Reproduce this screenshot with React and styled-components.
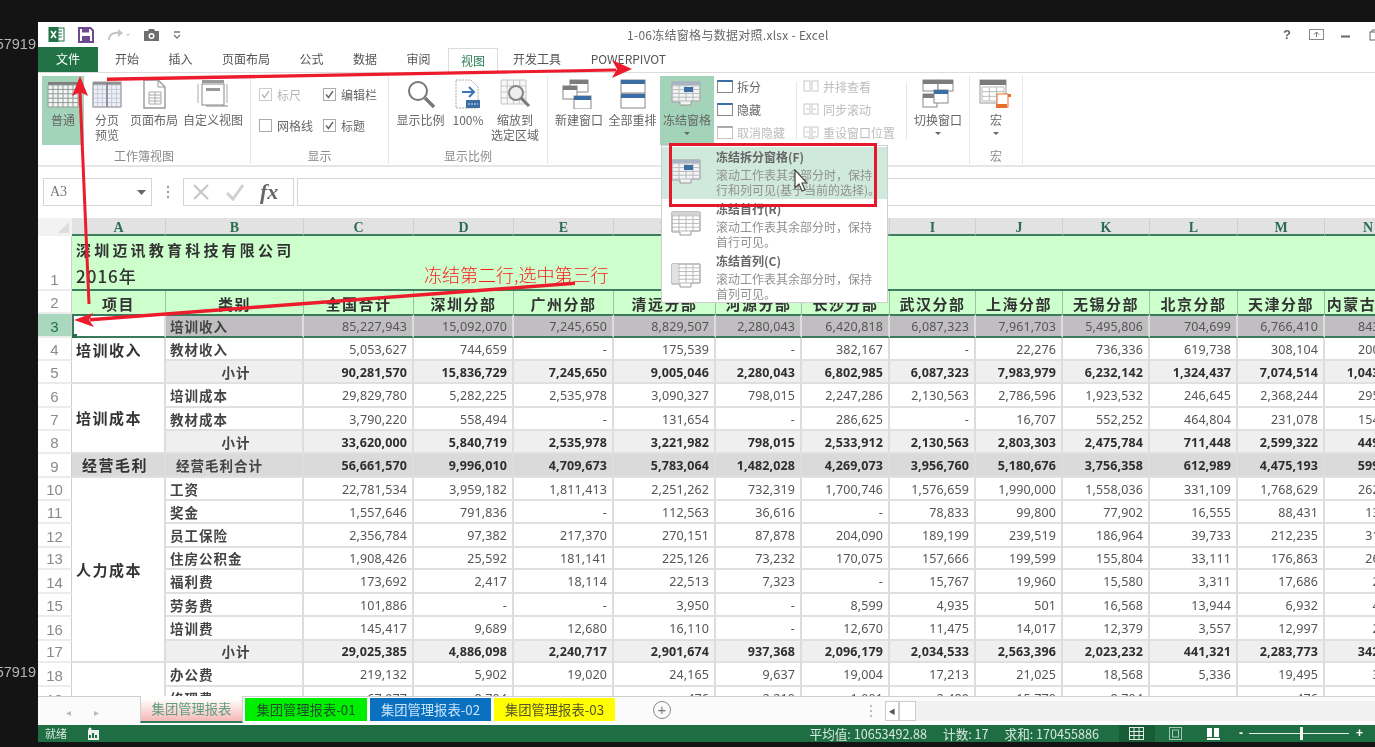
import React from "react";
import styled, { createGlobalStyle, css } from "styled-components";

const SANS = `"Noto Sans CJK SC", "Noto Sans", sans-serif`;
const NUM = `"Noto Sans", "Noto Sans CJK SC", sans-serif`;
const SERIF = `"Liberation Serif", "Noto Sans CJK SC", serif`;

const Global = createGlobalStyle`
  html, body { margin: 0; padding: 0; background: #141414; overflow: hidden; }
  * { box-sizing: border-box; }
`;

const Page = styled.div`
  position: relative; display: flex; width: 1375px; height: 747px; padding: 22px 0 5px;
  background: #141414; overflow: hidden; font-family: ${SANS}; filter: blur(0.5px);
`;
const Gutter = styled.div`
  flex: 0 0 38px; display: flex; flex-direction: column; justify-content: space-between;
  align-items: flex-end; padding: 14px 2px 62px 0; overflow: hidden;
`;
const GutterText = styled.span`
  font: 14.5px/16px "Liberation Sans", sans-serif; color: #b4b4b4;
`;
const Win = styled.div`
  flex: 1; min-width: 0; display: flex; flex-direction: column; background: #fff; overflow: hidden;
`;

/* title bar */
const TitleBar = styled.div`
  flex: 0 0 25px; display: flex; align-items: center; padding-left: 10px; position: relative;
`;
const Qat = styled.div`
  flex: 0 0 579px; display: flex; align-items: center; gap: 13px;
`;
const Title = styled.div`
  flex: 1; font-size: 12px; letter-spacing: 0.28px; color: #666; white-space: nowrap;
`;
const WinBtns = styled.div`
  display: flex; align-items: center; gap: 14px; margin-right: -6.5px;
  & > * { flex: 0 0 15px; width: 15px; }
`;
const HelpMark = styled.span`
  font: bold 13px "Liberation Sans", sans-serif; color: #666; text-align: center;
`;

/* tabs */
const TabRow = styled.div`
  flex: 0 0 25px; display: flex; align-items: stretch; position: relative;
`;
const FileTab = styled.div`
  flex: 0 0 60px; background: #217346; color: #fff; font-size: 12px; display: flex;
  align-items: center; justify-content: center; margin-right: 2.25px; padding-bottom: 2px;
`;
const Tab = styled.div`
  padding: 0 14.75px 2px; font-size: 12px; color: #555; display: flex; align-items: center; white-space: nowrap;
  ${p => p.$active && css`
    margin-left: 2.5px; padding: 0 12.25px 2px; color: #2a7d55; background: #fff;
    border: 1px solid #dcdcdc; border-bottom: 0;
    position: relative; top: 1px;
  `}
`;

/* ribbon */
const Ribbon = styled.div`
  flex: 0 0 95px; display: flex; border-top: 1px solid #dcdcdc; border-bottom: 2px solid #e6e6e6; padding-top: 3px;
`;
const Group = styled.div`
  flex: 0 0 ${p => p.$w}px; display: flex; flex-direction: column; border-right: 1px solid #e8e8e8; height: 88px;
`;
const GroupBody = styled.div`
  flex: 0 0 69px; display: flex; padding-left: ${p => p.$pl || 0}px; gap: ${p => p.$gap || 0}px;
`;
const GroupLabel = styled.div`
  flex: 1; text-align: center; font-size: 12px; line-height: 17px; padding-top: 2px; color: #8a8a8a;
`;
const BigBtn = styled.div`
  flex: 0 0 ${p => p.$w}px; display: flex; flex-direction: column; align-items: center; padding-top: 3px;
  background: ${p => (p.$on ? "#a3d3b9" : "transparent")};
  margin-left: ${p => p.$ml || 0}px;
  font-size: 12px; line-height: 15px; color: #666; text-align: center; height: ${p => (p.$on ? 69 : 66)}px;
  svg { flex: 0 0 30px; margin-bottom: 3px; }
`;
const Caret = styled.i`
  display: block; width: 0; height: 0; border: 3px solid transparent; border-top: 3px solid #666; border-bottom: 0; margin-top: 5px;
`;
const ChecksGrid = styled.div`
  display: grid; grid-template-columns: 64px auto; grid-auto-rows: 31px; padding: 3px 0 0 8px;
`;
const CheckItem = styled.label`
  display: flex; align-items: center; gap: 5px; font-size: 12px; color: ${p => (p.$off ? "#b5b5b5" : "#666")};
`;
const Box = styled.span`
  width: 13px; height: 13px; border: 1px solid ${p => (p.$off ? "#ccc" : "#aaa")}; display: flex; align-items: center; justify-content: center;
`;
const SmallCol = styled.div`
  flex: 0 0 ${p => p.$w}px; display: flex; flex-direction: column; margin-top: -1px; margin-left: ${p => p.$ml || 0}px;
`;
const SmallBtn = styled.div`
  flex: 0 0 23px; display: flex; align-items: center; gap: 4px; font-size: 12px; white-space: nowrap;
  color: ${p => (p.$off ? "#bdbdbd" : "#666")};
`;
const VSep = styled.div`
  flex: 0 0 1px; height: 58px; margin: 6px 6px 0; background: #e8e8e8;
`;

/* formula row */
const FormulaRow = styled.div`
  flex: 0 0 51px; display: flex; align-items: flex-start; padding: 11px 0 0 5px; height: 51px;
`;
const NameBox = styled.div`
  flex: 0 0 109px; height: 28px; border: 1px solid #d4d4d4; display: flex; align-items: center;
  justify-content: space-between; padding: 0 5px 0 6px; font: 14px ${SERIF}; color: #777;
`;
const Dots = styled.div`
  flex: 0 0 31px; height: 28px; display: flex; flex-direction: column; align-items: center; justify-content: center; gap: 3px;
  i { width: 2px; height: 2px; background: #999; display: block; }
`;
const FxBox = styled.div`
  flex: 0 0 111px; height: 28px; border: 1px solid #d4d4d4; display: flex; align-items: center; gap: 15px; padding-left: 8px;
`;
const FxMark = styled.span`
  font: italic bold 22px/24px ${SERIF}; color: #666;
`;
const FormulaInput = styled.div`
  flex: 1; height: 28px; margin-left: 3px; border: 1px solid #d4d4d4; border-right: 0;
`;

/* sheet */
const Sheet = styled.div`
  flex: 1 1 0; min-height: 0; overflow: hidden;
`;
const Grid = styled.table`
  border-collapse: separate; border-spacing: 0; table-layout: fixed; width: 1374px;
`;
const ColHead = styled.th`
  height: 18px; padding: 3px 0 0; background: #e2e2e2; border-bottom: 2px solid #3d7d60; border-right: 1px solid #cfcfcf;
  font: bold 14px/13px ${SERIF}; color: #2b6e52; overflow: hidden;
`;
const Corner = styled.th`
  padding: 0; background: #f2f2f2; position: relative; border-bottom: 1px solid #eee;
  i { position: absolute; right: 3px; bottom: 2px; width: 0; height: 0; border-left: 11px solid transparent; border-bottom: 11px solid #dcdcdc; }
`;
const Row = styled.tr`
  height: ${p => p.$h}px;
`;
const RowHead = styled.th`
  padding: 0; vertical-align: bottom; font: 15px/19px "Liberation Sans", sans-serif; font-weight: 400;
  color: ${p => (p.$on ? "#217346" : "#8a8a8a")}; background: ${p => (p.$on ? "#a9d8be" : "#fff")};
  border-right: 1px solid #cfcfcf; border-bottom: 2px solid #ececec; overflow: hidden;
`;
const kindStyle = {
  plain: css`background: #fff; color: #555;`,
  sub: css`background: #efefef; color: #2e2e2e; font-weight: 700;`,
  total: css`background: #dadada; color: #2e2e2e; font-weight: 700;`,
  sel: css`background: #c1bec2; color: #555; border-top: 2px solid #39795c; border-bottom: 2px solid #39795c;`,
};
const Num = styled.td`
  padding: 1px 5px 0 0; text-align: right; font: 400 12.5px/15px ${NUM}; letter-spacing: 0.12px; white-space: nowrap; overflow: hidden;
  border-right: 2px solid #dddddd; border-bottom: 2px solid #e0e0e0;
  ${p => kindStyle[p.$kind]}
`;
const Label = styled.td`
  padding: 0 0 0 ${p => (p.$kind === "total" ? 10 : 4)}px; font: 700 13.5px/16px ${SANS}; letter-spacing: 1px; color: #444; white-space: nowrap; overflow: hidden;
  border-right: 2px solid #dddddd; border-bottom: 2px solid #e0e0e0;
  ${p => kindStyle[p.$kind]}
  font-weight: 700; color: #444;
  ${p => p.$center && css`text-align: center; padding: 0 0 0 4px;`}
`;
const ACell = styled.td`
  padding: 0 0 0 4px; font: 700 15px/18px ${SANS}; letter-spacing: 1.5px; color: #333; white-space: nowrap; overflow: hidden; position: relative;
  vertical-align: ${p => (p.$top ? "top" : "middle")};
  border-right: 2px solid #dddddd; border-bottom: 2px solid #e0e0e0;
  ${p => kindStyle[p.$kind]}
  color: #333;
  ${p => p.$top && css`padding-top: 3px;`}
  ${p => p.$sel && css`background: #fff; border-left: 2px solid #39795c; overflow: visible;`}
  ${p => p.$center && css`padding-left: 10px;`}
`;
const Handle = styled.i`
  position: absolute; left: -2px; bottom: -3px; width: 5px; height: 5px; background: #217346;
`;
const TitleCell = styled.td`
  background: #ccffcc; vertical-align: bottom; padding: 0 0 0 4px; color: #333; font: 700 15px/26px ${SANS}; white-space: nowrap;
  border-bottom: 2px solid #3d7d60;
`;
const TitleLine = styled.div`
  font-size: ${p => (p.$light ? 17 : 15)}px; font-weight: ${p => (p.$light ? 500 : 700)}; letter-spacing: ${p => (p.$light ? 1 : 3.2)}px;
`;
const HeadCell = styled.td`
  background: #ccffcc; padding: 0 0 2px; text-align: center; font: 700 15px/17px ${SANS}; letter-spacing: 1.5px; color: #333; white-space: nowrap; overflow: hidden;
  border-right: 1px solid #99c49f; vertical-align: bottom;
`;

/* sheet tabs */
const TabsBar = styled.div`
  flex: 0 0 29px; min-height: 0; display: flex; align-items: flex-start; background: #fbfbfb; border-top: 1px solid #cfcfcf; font-size: 13.3px;
`;
const TabsNav = styled.div`
  flex: 0 0 102px; height: 28px; display: flex; align-items: center; justify-content: center; gap: 23px; color: #bbb; font-size: 10px; padding-right: 14px;
`;
const ActiveSheet = styled.div`
  flex: 0 0 103px; height: 27px; margin-right: 2px; display: flex; align-items: center; justify-content: center; margin-top: -1px;
  background: linear-gradient(#fff 10%, #f5b8b8); color: #5f9d80; border: 1px solid #cfcfcf; border-top: 0; border-bottom: 2px solid #2d7a56;
`;
const SheetTab = styled.div`
  flex: 0 0 ${p => p.$w}px; height: 23px; margin: 1px 3px 0 0; display: flex; align-items: center; justify-content: center;
  background: ${p => p.$bg}; color: ${p => p.$fg};
`;
const AddSheet = styled.div`
  flex: 0 0 18px; margin: 4px 200px 0 35px; height: 18px; border: 1px solid #888; border-radius: 50%; display: flex; align-items: center; justify-content: center;
  color: #777; font: 15px/14px "Liberation Sans", sans-serif;
`;
const TabDots = styled.div`
  flex: 0 0 15px; height: 28px; display: flex; flex-direction: column; gap: 3px; justify-content: center; margin-left: -1px;
  i { width: 2px; height: 2px; background: #bbb; display: block; }
`;
const ScrollBtn = styled.div`
  flex: 0 0 ${p => p.$w}px; height: 20px; margin-top: 4px; background: #fff; border: 1px solid #ccc; color: #555; font-size: 7px; display: flex; align-items: center; justify-content: center;
`;
const ScrollTrack = styled.div`
  flex: 1; height: 20px; margin-top: 4px; background: #f1f1f1;
`;

/* status */
const Status = styled.div`
  flex: 0 0 17px; height: 17px; min-height: 0; overflow: hidden; display: flex; align-items: center; background: #1f6e43; color: #d8e8df; font-size: 11px; line-height: 17px; padding-left: 7px;
`;
const StatusIcon = styled.span`
  display: flex; margin-left: 20px;
`;
const StatusInfo = styled.div`
  margin-left: auto; display: flex; gap: 16px; white-space: nowrap; margin-right: 20px; font-family: ${SANS}; font-size: 12.6px; line-height: 17px;
`;
const ViewBtn = styled.div`
  flex: 0 0 ${p => p.$w}px; height: 17px; display: flex; align-items: center; justify-content: center;
  background: ${p => (p.$on ? "#195c38" : "transparent")};
`;
const Zoomer = styled.div`
  display: flex; align-items: center; gap: 6.5px; margin: 0 12px 0 8px; font: bold 12px/17px "Liberation Sans", sans-serif; color: #fff;
`;
const ZoomTrack = styled.div`
  width: 100px; height: 1px; background: #e4efe9; position: relative;
`;
const ZoomThumb = styled.i`
  position: absolute; left: 51px; top: -6px; width: 3px; height: 13px; background: #f3f3f3;
`;

/* overlays */
const Menu = styled.div`
  position: absolute; left: 661px; top: 145px; width: 227px; height: 158px; background: #fff; border: 1px solid #cfcfcf; padding-top: 1px;
`;
const MenuItem = styled.div`
  height: 52px; display: flex; padding: 2px 4px 0 9px; background: ${p => (p.$on ? "#cfe9dd" : "transparent")};
`;
const MenuIcon = styled.div`
  flex: 0 0 45px; padding-top: 10px;
`;
const MenuBody = styled.div`
  flex: 1; font-size: 12px; line-height: 14.5px; color: #919191; white-space: nowrap;
`;
const MenuTitle = styled.div`
  font-weight: 700; color: #666; line-height: 16px; margin-bottom: 3px;
`;
const RedBox = styled.div`
  position: absolute; left: 669px; top: 143px; width: 208px; height: 64px; border: 3px solid #e3192b;
`;
const Note = styled.div`
  position: absolute; left: 424px; top: 262px; color: #ff1a1a; font-size: 18px; line-height: 24px; font-weight: 300; white-space: nowrap;
`;
const Arrows = styled.svg`
  position: absolute; left: 0; top: 0; pointer-events: none;
`;
const Pointer = styled.svg`
  position: absolute; left: 794px; top: 169px;
`;

/* ---------- icons ---------- */
const BLUE = "#3b6ea5";
const XlLogo = () => (
  <svg width="17" height="17" viewBox="0 0 17 17"><rect x="7" y="2" width="9" height="13" fill="#fff" stroke="#217346"/><path d="M10 5h4M10 8h4M10 11h4" stroke="#217346"/><rect x="0.5" y="1" width="10" height="15" fill="#217346"/><path d="M3 5l5 7M8 5l-5 7" stroke="#fff" strokeWidth="1.6"/></svg>
);
const SaveIcon = () => (
  <svg width="16" height="16" viewBox="0 0 16 16"><path d="M1 1h11.5L15 3.5V15H1z" fill="#fff" stroke="#6c4a92" strokeWidth="2"/><rect x="4" y="1.5" width="7" height="4" fill="#6c4a92"/><rect x="4" y="9" width="8" height="5" fill="#6c4a92"/></svg>
);
const RedoIcon = () => (
  <svg width="23" height="14" viewBox="0 0 23 14"><path d="M2 12c0-6 5-8 11-7" fill="none" stroke="#c4c4c4" strokeWidth="2"/><path d="M11 1l5 4-5 4z" fill="#c4c4c4"/><path d="M19 6h4l-2 2z" fill="#c4c4c4"/></svg>
);
const CameraIcon = () => (
  <svg width="17" height="14" viewBox="0 0 17 14"><path d="M1 3h4l1-2h5l1 2h4v10H1z" fill="#6e6e6e"/><circle cx="8.5" cy="8" r="3" fill="#fff"/><circle cx="8.5" cy="8" r="1.6" fill="#6e6e6e"/></svg>
);
const QatMore = () => (
  <svg width="8" height="10" viewBox="0 0 8 10"><path d="M1 2h6M1 5l3 3 3-3" fill="none" stroke="#777" strokeWidth="1.3"/></svg>
);
const RibbonModeIcon = () => (
  <svg width="15" height="11" viewBox="0 0 15 11"><rect x="0.5" y="0.5" width="14" height="10" fill="none" stroke="#888"/><path d="M7.5 8V3.5M5 5.5l2.5-2.5L10 5.5" fill="none" stroke="#777"/></svg>
);
const MinIcon = () => <svg width="15" height="10" viewBox="0 0 15 10"><path d="M3 6.5h9" stroke="#666" strokeWidth="2"/></svg>;
const RestoreIcon = () => <svg width="15" height="12" viewBox="0 0 15 12"><path d="M5 3V1h8v7h-2" fill="none" stroke="#666"/><rect x="3" y="3" width="8" height="8" fill="none" stroke="#666"/></svg>;

const cells = (x, y, w, h, cols, rows, c = "#bdbdbd") => {
  const d = [];
  for (let i = 0; i <= cols; i++) d.push(`M${x + (w * i) / cols} ${y}v${h}`);
  for (let j = 0; j <= rows; j++) d.push(`M${x} ${y + (h * j) / rows}h${w}`);
  return <path d={d.join("")} stroke={c} strokeWidth="1" fill="none" />;
};
const Ico = ({ children, w = 36, h = 30 }) => <svg width={w} height={h} viewBox={`0 0 ${w} ${h}`}>{children}</svg>;
const NormalIco = () => <Ico><rect x="3" y="3" width="30" height="25" fill="#f3f6f4"/><rect x="3" y="3" width="30" height="3" fill="#7f7f7f"/>{cells(3, 6, 30, 22, 6, 5, "#8f9a94")}</Ico>;
const PageBreakIco = () => <Ico><rect x="4" y="3" width="28" height="25" fill="#eef0f7"/><rect x="4" y="3" width="28" height="3" fill="#8c8c8c"/>{cells(4, 6, 28, 22, 6, 5, "#c3c7d8")}<path d="M18 3v25" stroke="#7a7a7a" strokeWidth="1.5"/><rect x="4" y="3" width="28" height="25" fill="none" stroke="#999"/></Ico>;
const PageLayoutIco = () => <Ico w={30}><path d="M5 1h14l7 7v21H5z" fill="#fff" stroke="#999" strokeWidth="1.4"/><path d="M19 1v7h7" fill="none" stroke="#999"/>{cells(10, 13, 12, 12, 2, 4, "#aaa")}</Ico>;
const CustomIco = () => <Ico w={32}><path d="M1 5v19M30 5v19" stroke="#aaa"/><rect x="5" y="1" width="22" height="3" fill="#999"/><rect x="5" y="5" width="22" height="21" fill="#fff" stroke="#888"/><rect x="9" y="9" width="14" height="3" fill="#999"/><path d="M9 27h22" stroke="#888"/></Ico>;
const MagnifierIco = () => <Ico w={32}><circle cx="13" cy="12" r="9" fill="#fff" stroke="#777" strokeWidth="2"/><path d="M20 19l9 9" stroke="#777" strokeWidth="3.4"/></Ico>;
const HundredIco = () => <Ico w={28}><path d="M2 1h15l7 7v21H2z" fill="#fff" stroke="#aaa" strokeDasharray="2 1"/><path d="M8 13h11M15 8l5 5-5 5" fill="none" stroke="#3b78b6" strokeWidth="2"/><rect x="12" y="21" width="14" height="8" fill="#3b6ea5"/><path d="M14 25h10" stroke="#dfe8f2" strokeDasharray="2 1"/></Ico>;
const FitIco = () => <Ico w={32}><rect x="2" y="1" width="25" height="24" fill="#f7f7f7"/>{cells(2, 1, 25, 24, 4, 4, "#c6c6c6")}<circle cx="17" cy="14" r="7" fill="#efefef" stroke="#888" strokeWidth="2"/><path d="M22 19l8 8" stroke="#777" strokeWidth="3"/></Ico>;
const Winbox = ({ x, y, w, h, top = "#7c7c7c" }) => <g><rect x={x} y={y} width={w} height={h} fill="#fff" stroke="#888"/><rect x={x} y={y} width={w} height="4" fill={top}/></g>;
const NewWinIco = () => <Ico><Winbox x={9} y={1} w={18} h={12}/><Winbox x={2} y={7} w={14} h={13}/><Winbox x={13} y={17} w={17} h={13} top={BLUE}/></Ico>;
const ArrangeIco = () => <Ico w={28}><rect x="2" y="1" width="24" height="13" fill="#fff" stroke="#888"/><rect x="2" y="1" width="24" height="4" fill={BLUE}/><rect x="2" y="15" width="24" height="14" fill="#fff" stroke="#888"/><rect x="2" y="15" width="24" height="4" fill={BLUE}/></Ico>;
const FreezeTable = ({ first }) => (
  <svg width="30" height="26" viewBox="0 0 30 26">
    <path d="M1 1h28v19H20v4H9v-3H1z" fill={first === "sel" ? "#f2f5f8" : "#fff"} stroke="#999"/>
    {cells(1, 1, 28, 19, 4, 5, "#b9b9b9")}
    {first === "sel" && <><rect x="1" y="1" width="28" height="3" fill="#a8b3c4"/><rect x="13" y="6" width="9" height="5" fill={BLUE}/></>}
    {first === "row" && <rect x="1" y="1" width="28" height="3" fill="#d4d4d4"/>}
    {first === "col" && <rect x="1" y="1" width="6" height="19" fill="#e2e2e2"/>}
  </svg>
);
const FreezeIco = () => <Ico><g transform="translate(2,2)"><FreezeTable first="sel"/></g></Ico>;
const SwitchIco = () => <Ico w={32}><Winbox x={1} y={1} w={15} h={11}/><Winbox x={16} y={1} w={15} h={11}/><Winbox x={1} y={15} w={14} h={13}/><Winbox x={12} y={11} w={14} h={13} top={BLUE}/></Ico>;
const MacroIco = () => <Ico w={34}><rect x="1" y="1" width="26" height="23" fill="#fff" stroke="#999"/><rect x="1" y="1" width="26" height="5" fill="#7a7a7a"/>{cells(3, 8, 22, 14, 3, 3, "#bbb")}<rect x="18" y="15" width="11" height="13" fill="#fff" stroke="#e8702a"/><rect x="17" y="25" width="11" height="4" fill="#e8702a"/><rect x="29" y="15" width="3" height="3" fill="#e8702a"/></Ico>;
const SmallWin = ({ dim }) => (
  <svg width="16" height="15" viewBox="0 0 16 15"><rect x="0.5" y="1.5" width="15" height="12" fill="#fff" stroke={dim ? "#c4c4c4" : "#888"}/><rect x="0.5" y="1" width="15" height="2" fill={dim ? "#aaa" : BLUE}/></svg>
);
const PairIco = ({ n }) => (
  <svg width="16" height="15" viewBox="0 0 16 15" fill="none" stroke="#c8c8c8"><rect x="1" y="2" width="6" height="10"/><rect x="9" y="2" width="6" height="10"/>{n > 0 && <path d="M3 7h3M10 7h3"/>}{n > 1 && <path d="M5 13l3 1 3-1"/>}</svg>
);
const CheckMark = ({ off }) => <svg width="11" height="11" viewBox="0 0 11 11"><path d="M2 5.5l2.5 3L9 2" fill="none" stroke={off ? "#bbb" : "#666"} strokeWidth="1.4"/></svg>;
const Cross = () => <svg width="18" height="18" viewBox="0 0 18 18"><path d="M2 2l14 14M16 2L2 16" stroke="#c6c6c6" strokeWidth="2.2"/></svg>;
const Tick = () => <svg width="20" height="18" viewBox="0 0 20 18"><path d="M2 10l6 6L18 2" fill="none" stroke="#d0d0d0" strokeWidth="3"/></svg>;
const DownTri = () => <svg width="9" height="5" viewBox="0 0 9 5"><path d="M0 0h9L4.5 5z" fill="#666"/></svg>;
const ReadyIco = () => <svg width="13" height="14" viewBox="0 0 13 14"><rect x="1" y="3" width="11" height="10" fill="#e9f2ed"/><path d="M3 11V8M6 11V6M9 11V8" stroke="#1f6e43" strokeWidth="2"/><circle cx="3" cy="2" r="1.5" fill="#e9f2ed"/></svg>;
const ViewNormal = () => <svg width="15" height="13" viewBox="0 0 15 13" fill="none" stroke="#e2eee8"><rect x="0.5" y="0.5" width="14" height="12"/><path d="M5 0v13M10 0v13M0 4.5h15M0 8.5h15"/></svg>;
const ViewLayout = () => <svg width="15" height="13" viewBox="0 0 15 13" fill="none" stroke="#a9c7b7"><rect x="1.5" y="0.5" width="12" height="12"/><rect x="4.5" y="3" width="6" height="7"/></svg>;
const ViewBreak = () => <svg width="15" height="14" viewBox="0 0 15 14"><path d="M1 1h5v9H1zM1 11h13v2H1z" fill="#fff"/><path d="M8 1h5v9H8z" fill="#fff"/></svg>;

/* ---------- data ---------- */
const colWidths = [34, 94, 138, 110, 100, 100, 102, 86, 88, 86, 87, 87, 88, 87, 87];
const letters = "ABCDEFGHIJKLMN".split("");
const heads = ["全国合计", "深圳分部", "广州分部", "清远分部", "河源分部", "长沙分部", "武汉分部", "上海分部", "无锡分部", "北京分部", "天津分部", "内蒙古分部"];
const D = [
  [3, 24, "sel", "培训收入", "85,227,943 15,092,070 7,245,650 8,829,507 2,280,043 6,420,818 6,087,323 7,961,703 5,495,806 704,699 6,766,410 843,216"],
  [4, 23, "plain", "教材收入", "5,053,627 744,659 - 175,539 - 382,167 - 22,276 736,336 619,738 308,104 200,158"],
  [5, 23, "sub", "小计", "90,281,570 15,836,729 7,245,650 9,005,046 2,280,043 6,802,985 6,087,323 7,983,979 6,232,142 1,324,437 7,074,514 1,043,374"],
  [6, 24, "plain", "培训成本", "29,829,780 5,282,225 2,535,978 3,090,327 798,015 2,247,286 2,130,563 2,786,596 1,923,532 246,645 2,368,244 295,026"],
  [7, 23, "plain", "教材成本", "3,790,220 558,494 - 131,654 - 286,625 - 16,707 552,252 464,804 231,078 154,201"],
  [8, 23, "sub", "小计", "33,620,000 5,840,719 2,535,978 3,221,982 798,015 2,533,912 2,130,563 2,803,303 2,475,784 711,448 2,599,322 449,227"],
  [9, 24, "total", "经营毛利合计", "56,661,570 9,996,010 4,709,673 5,783,064 1,482,028 4,269,073 3,956,760 5,180,676 3,756,358 612,989 4,475,193 599,147"],
  [10, 23, "plain", "工资", "22,781,534 3,959,182 1,811,413 2,251,262 732,319 1,700,746 1,576,659 1,990,000 1,558,036 331,109 1,768,629 262,418"],
  [11, 23, "plain", "奖金", "1,557,646 791,836 - 112,563 36,616 - 78,833 99,800 77,902 16,555 88,431 13,164"],
  [12, 24, "plain", "员工保险", "2,356,784 97,382 217,370 270,151 87,878 204,090 189,199 239,519 186,964 39,733 212,235 31,408"],
  [13, 22, "plain", "住房公积金", "1,908,426 25,592 181,141 225,126 73,232 170,075 157,666 199,599 155,804 33,111 176,863 26,137"],
  [14, 24, "plain", "福利费", "173,692 2,417 18,114 22,513 7,323 - 15,767 19,960 15,580 3,311 17,686 2,613"],
  [15, 23, "plain", "劳务费", "101,886 - - 3,950 - 8,599 4,935 501 16,568 13,944 6,932 4,130"],
  [16, 24, "plain", "培训费", "145,417 9,689 12,680 16,110 - 12,670 11,475 14,017 12,379 3,557 12,997 2,118"],
  [17, 22, "sub", "小计", "29,025,385 4,886,098 2,240,717 2,901,674 937,368 2,096,179 2,034,533 2,563,396 2,023,232 441,321 2,283,773 342,194"],
  [18, 24, "plain", "办公费", "219,132 5,902 19,020 24,165 9,637 19,004 17,213 21,025 18,568 5,336 19,495 3,142"],
  [19, 24, "plain", "修理费", "67,077 8,704 - 476 2,210 1,001 2,489 15,770 8,704 - 476 612"],
];
const aCol = {
  4: <ACell $top $kind="plain" rowSpan={2}>培训收入</ACell>,
  6: <ACell $kind="plain" rowSpan={3}>培训成本</ACell>,
  9: <ACell $center $kind="total">经营毛利</ACell>,
  10: <ACell $kind="plain" rowSpan={8}>人力成本</ACell>,
  18: <ACell $kind="plain" rowSpan={2} />,
};

const BigItem = ({ w, on, ml, icon, caret, children }) => (
  <BigBtn $w={w} $on={on} $ml={ml}>{icon}<span>{children}</span>{caret && <Caret />}</BigBtn>
);
const Check = ({ off, on, children }) => (
  <CheckItem $off={off}><Box $off={off}>{on && <CheckMark off={off} />}</Box>{children}</CheckItem>
);
const MenuEntry = ({ on, kind, title, l1, l2 }) => (
  <MenuItem $on={on}>
    <MenuIcon><FreezeTable first={kind} /></MenuIcon>
    <MenuBody><MenuTitle>{title}</MenuTitle>{l1}<br />{l2}</MenuBody>
  </MenuItem>
);

export default function App() {
  return (
    <Page>
      <Global />
      <Gutter><GutterText>57919</GutterText><GutterText>57919</GutterText></Gutter>
      <Win>
        <TitleBar>
          <Qat><XlLogo /><SaveIcon /><RedoIcon /><CameraIcon /><QatMore /></Qat>
          <Title>1-06冻结窗格与数据对照.xlsx - Excel</Title>
          <WinBtns><HelpMark>?</HelpMark><RibbonModeIcon /><MinIcon /><RestoreIcon /></WinBtns>
        </TitleBar>
        <TabRow>
          <FileTab>文件</FileTab>
          {["开始", "插入", "页面布局", "公式", "数据", "审阅"].map(t => <Tab key={t}>{t}</Tab>)}
          <Tab $active>视图</Tab>
          <Tab>开发工具</Tab>
          <Tab>POWERPIVOT</Tab>
        </TabRow>
        <Ribbon>
          <Group $w={213}>
            <GroupBody $pl={4} $gap={5}>
              <BigItem w={42} on icon={<NormalIco />}>普通</BigItem>
              <BigItem w={36} icon={<PageBreakIco />}>分页<br />预览</BigItem>
              <BigItem w={48} icon={<PageLayoutIco />}>页面布局</BigItem>
              <BigItem w={60} icon={<CustomIco />}>自定义视图</BigItem>
            </GroupBody>
            <GroupLabel>工作簿视图</GroupLabel>
          </Group>
          <Group $w={138}>
            <GroupBody>
              <ChecksGrid>
                <Check off on>标尺</Check>
                <Check on>编辑栏</Check>
                <Check>网格线</Check>
                <Check on>标题</Check>
              </ChecksGrid>
            </GroupBody>
            <GroupLabel>显示</GroupLabel>
          </Group>
          <Group $w={159}>
            <GroupBody $pl={7} $gap={7}>
              <BigItem w={49} icon={<MagnifierIco />}>显示比例</BigItem>
              <BigItem w={32} icon={<HundredIco />}>100%</BigItem>
              <BigItem w={48} icon={<FitIco />}>缩放到<br />选定区域</BigItem>
            </GroupBody>
            <GroupLabel>显示比例</GroupLabel>
          </Group>
          <Group $w={422}>
            <GroupBody $pl={7}>
              <BigItem w={48} icon={<NewWinIco />}>新建窗口</BigItem>
              <BigItem w={49} ml={5} icon={<ArrangeIco />}>全部重排</BigItem>
              <BigItem w={54} ml={3} on caret icon={<FreezeIco />}>冻结窗格</BigItem>
              <SmallCol $w={73} $ml={3}>
                <SmallBtn><SmallWin />拆分</SmallBtn>
                <SmallBtn><SmallWin />隐藏</SmallBtn>
                <SmallBtn $off><SmallWin dim />取消隐藏</SmallBtn>
              </SmallCol>
              <VSep />
              <SmallCol $w={97}>
                <SmallBtn $off><PairIco n={0} />并排查看</SmallBtn>
                <SmallBtn $off><PairIco n={1} />同步滚动</SmallBtn>
                <SmallBtn $off><PairIco n={2} />重设窗口位置</SmallBtn>
              </SmallCol>
              <VSep />
              <BigItem w={50} caret icon={<SwitchIco />}>切换窗口</BigItem>
            </GroupBody>
            <GroupLabel>窗口</GroupLabel>
          </Group>
          <Group $w={52}>
            <GroupBody>
              <BigItem w={52} caret icon={<MacroIco />}>宏</BigItem>
            </GroupBody>
            <GroupLabel>宏</GroupLabel>
          </Group>
        </Ribbon>
        <FormulaRow>
          <NameBox>A3<DownTri /></NameBox>
          <Dots><i /><i /><i /></Dots>
          <FxBox><Cross /><Tick /><FxMark>fx</FxMark></FxBox>
          <FormulaInput />
        </FormulaRow>
        <Sheet>
          <Grid>
            <colgroup>{colWidths.map((w, i) => <col key={i} width={w} />)}</colgroup>
            <thead>
              <tr><Corner><i /></Corner>{letters.map(l => <ColHead key={l}>{l}</ColHead>)}</tr>
            </thead>
            <tbody>
              <Row $h={55}>
                <RowHead>1</RowHead>
                <TitleCell colSpan={14}>
                  <TitleLine>深圳迈讯教育科技有限公司</TitleLine>
                  <TitleLine $light>2016年</TitleLine>
                </TitleCell>
              </Row>
              <Row $h={23}>
                <RowHead>2</RowHead>
                <HeadCell>项目</HeadCell>
                <HeadCell>类别</HeadCell>
                {heads.map(h => <HeadCell key={h}>{h}</HeadCell>)}
              </Row>
              {D.map(([n, h, kind, label, vals]) => (
                <Row key={n} $h={h}>
                  <RowHead $on={n === 3}>{n}</RowHead>
                  {n === 3 ? <ACell $sel $kind="sel"><Handle /></ACell> : aCol[n]}
                  <Label $kind={kind} $center={kind === "sub"}>{label}</Label>
                  {vals.split(" ").map((v, i) => <Num key={i} $kind={kind}>{v}</Num>)}
                </Row>
              ))}
            </tbody>
          </Grid>
        </Sheet>
        <TabsBar>
          <TabsNav><span>◂</span><span>▸</span></TabsNav>
          <ActiveSheet>集团管理报表</ActiveSheet>
          <SheetTab $w={122} $bg="#00ee00" $fg="#1d4d2a">集团管理报表-01</SheetTab>
          <SheetTab $w={121} $bg="#0a70c0" $fg="#c8e4f8">集团管理报表-02</SheetTab>
          <SheetTab $w={121} $bg="#ffff00" $fg="#55552a">集团管理报表-03</SheetTab>
          <AddSheet>+</AddSheet>
          <TabDots><i /><i /><i /></TabDots>
          <ScrollBtn $w={14}>◀</ScrollBtn>
          <ScrollBtn $w={17} />
          <ScrollTrack />
        </TabsBar>
        <Status>
          就绪
          <StatusIcon><ReadyIco /></StatusIcon>
          <StatusInfo>
            <span>平均值: 10653492.88</span><span>计数: 17</span><span>求和: 170455886</span>
          </StatusInfo>
          <ViewBtn $w={36} $on><ViewNormal /></ViewBtn>
          <ViewBtn $w={41}><ViewLayout /></ViewBtn>
          <ViewBtn $w={35}><ViewBreak /></ViewBtn>
          <Zoomer>-<ZoomTrack><ZoomThumb /></ZoomTrack>+</Zoomer>
        </Status>
      </Win>

      <Menu>
        <MenuEntry on kind="sel" title="冻结拆分窗格(F)" l1="滚动工作表其余部分时，保持" l2="行和列可见(基于当前的选择)。" />
        <MenuEntry kind="row" title="冻结首行(R)" l1="滚动工作表其余部分时，保持" l2="首行可见。" />
        <MenuEntry kind="col" title="冻结首列(C)" l1="滚动工作表其余部分时，保持" l2="首列可见。" />
      </Menu>
      <RedBox />
      <Pointer width="14" height="24" viewBox="0 0 14 24"><path d="M1 1v18l4-4 3 7 3-1-3-7h5z" fill="#fff" stroke="#444" strokeWidth="1.2"/></Pointer>
      <Note>冻结第二行,选中第三行</Note>
      <Arrows width="1375" height="747" viewBox="0 0 1375 747">
        <g fill="#ec1c2c" stroke="none">
          <path d="M107 77.5L616 68.5v3L107 81z"/>
          <path d="M632 69L612 60l5 9-5 9z"/>
          <path d="M87.5 304l-9-212 3 0 9 212z"/>
          <path d="M80 76l-8 20 8-4 8 4z"/>
          <path d="M575 281.5L90 318v3.5L575 285z"/>
          <path d="M74 320l19-7-4 7 5 7z"/>
        </g>
      </Arrows>
    </Page>
  );
}
